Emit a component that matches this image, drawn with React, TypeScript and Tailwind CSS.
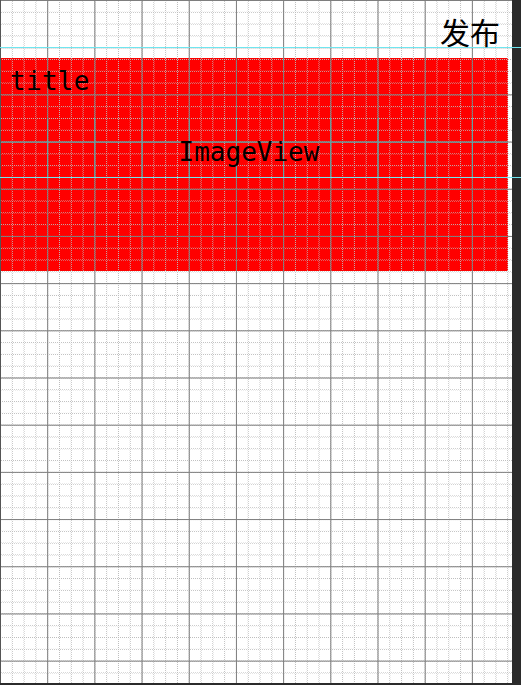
export default function App() {
  return (
    <div className="relative w-[521px] h-[685px] bg-[#2b2b2b] overflow-hidden">
      {/* device canvas */}
      <div className="relative w-[512px] h-[683px] bg-white">
        <div className="flex flex-col">
          <div className="h-[58px] flex justify-end items-center pr-[12px] pt-[4px]">
            <span className="relative z-10 text-[30px] leading-none text-black font-['Noto_Sans_CJK_SC',sans-serif]">
              发布
            </span>
          </div>

          <div className="w-[508px] h-[213px] bg-[#ff0000] flex flex-col font-['DejaVu_Sans_Mono',monospace] text-black">
            <div className="relative z-10 pl-[10px] pt-[8px] text-[26px] leading-[30px] tracking-[0.3px]">title</div>
            <div className="flex-1 flex justify-center pt-[41px] pr-[10px]">
              <span className="relative z-10 text-[26px] leading-[30px] h-[30px]">ImageView</span>
            </div>
          </div>
        </div>

        {/* dotted sub grid */}
        <div className="pointer-events-none absolute inset-0 bg-[linear-gradient(to_right,#bcbcbc_1px,transparent_1px),linear-gradient(to_bottom,#bcbcbc_1px,transparent_1px)] bg-[size:11.8px_11.8px] [mask-image:conic-gradient(#000_25%,transparent_0_50%,#000_0_75%,transparent_0)] [mask-size:2px_2px]" />
        {/* main grid */}
        <div className="pointer-events-none absolute inset-0 bg-[linear-gradient(to_right,#7d7d7d_1px,transparent_1px),linear-gradient(to_bottom,#7d7d7d_1px,transparent_1px)] bg-[size:47.2px_47.2px]" />
        {/* tinted band where the image view is selected */}
        <div className="pointer-events-none absolute left-0 top-[118px] w-[508px] h-[60px] bg-[linear-gradient(to_right,#5aa9a9_1px,transparent_1px),linear-gradient(to_bottom,#5aa9a9_1px,transparent_1px)] bg-[size:47.2px_47.2px] bg-[position:0_23.6px]" />
        <div className="pointer-events-none absolute left-0 top-0 w-px h-full bg-[#555]" />
      </div>

      {/* guide lines */}
      <div className="pointer-events-none absolute left-0 top-[47px] w-full h-px bg-[#6fe6f0]" />
      <div className="pointer-events-none absolute left-0 top-[177px] w-full h-px bg-[#6fe6f0]" />
    </div>
  )
}
